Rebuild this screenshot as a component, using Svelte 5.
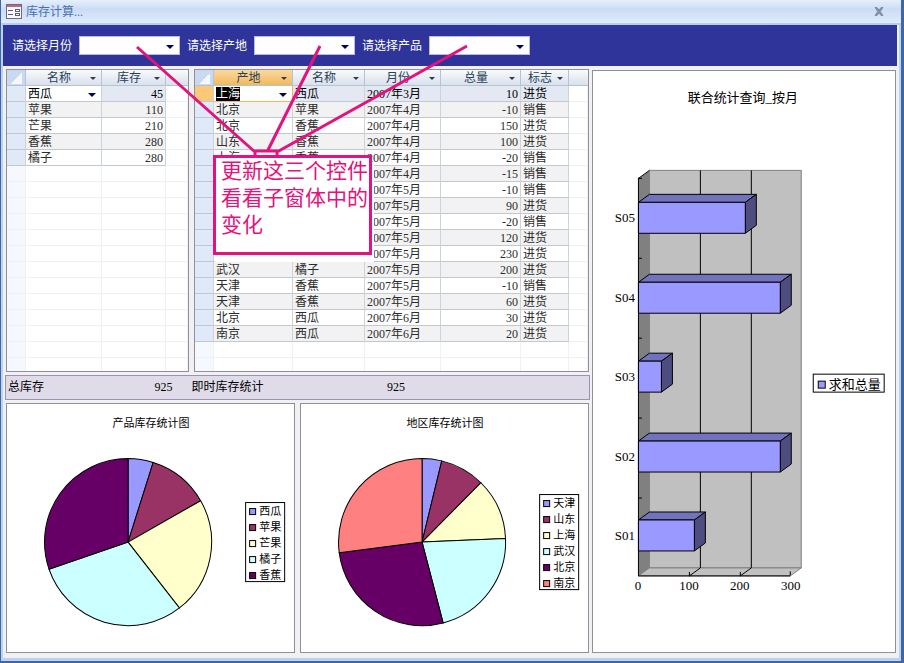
<script>
    // filters

    const filters = [
        { id: "month", label: "请选择月份" },
        { id: "place", label: "请选择产地" },
        { id: "product", label: "请选择产品" },
    ];

    // tables

    const rowCount = 18;

    const stock = [
        ["西瓜", 45],
        ["苹果", 110],
        ["芒果", 210],
        ["香蕉", 280],
        ["橘子", 280],
    ];

    const records = [
        ["上海", "西瓜", "2007年3月", 10, "进货"],
        ["北京", "苹果", "2007年4月", -10, "销售"],
        ["北京", "香蕉", "2007年4月", 150, "进货"],
        ["山东", "香蕉", "2007年4月", 100, "进货"],
        ["上海", "香蕉", "2007年4月", -20, "销售"],
        ["", "", "2007年4月", -15, "销售"],
        ["", "", "2007年5月", -10, "销售"],
        ["", "", "2007年5月", 90, "进货"],
        ["", "", "2007年5月", -20, "销售"],
        ["", "", "2007年5月", 120, "进货"],
        ["", "", "2007年5月", 230, "进货"],
        ["武汉", "橘子", "2007年5月", 200, "进货"],
        ["天津", "香蕉", "2007年5月", -10, "销售"],
        ["天津", "香蕉", "2007年5月", 60, "进货"],
        ["北京", "西瓜", "2007年6月", 30, "进货"],
        ["南京", "西瓜", "2007年6月", 20, "进货"],
    ];

    const tables = [
        { id: "stock", heads: ["名称", "库存"], rows: stock, num: 1 },
        {
            id: "records",
            heads: ["产地", "名称", "月份", "总量", "标志"],
            rows: records,
            num: 3,
        },
    ];

    const blanks = (table) =>
        Array.from({ length: rowCount - table.rows.length });

    // pies

    const colors = [
        "#9999ff",
        "#993366",
        "#ffffcc",
        "#ccffff",
        "#660066",
        "#ff8080",
    ];

    const pies = [
        {
            title: "产品库存统计图",
            legendY: 98,
            data: [
                ["西瓜", 45],
                ["苹果", 110],
                ["芒果", 210],
                ["橘子", 280],
                ["香蕉", 280],
            ],
        },
        {
            title: "地区库存统计图",
            legendY: 90,
            data: [
                ["天津", 35],
                ["山东", 80],
                ["上海", 110],
                ["武汉", 200],
                ["北京", 250],
                ["南京", 250],
            ],
        },
    ];

    const slices = (data, cx, cy, r) => {
        const total = data.reduce((sum, d) => sum + d[1], 0);
        const point = (v) => {
            const a = (v / total) * Math.PI * 2;
            return `${cx + r * Math.sin(a)} ${cy - r * Math.cos(a)}`;
        };
        let from = 0;
        return data.map((d) => {
            const to = from + d[1];
            const path = `M${cx} ${cy}L${point(from)}A${r} ${r} 0 0 1 ${point(to)}Z`;
            from = to;
            return path;
        });
    };

    // bars, top to bottom

    const bars = [
        ["S05", 210],
        ["S04", 280],
        ["S03", 45],
        ["S02", 280],
        ["S01", 110],
    ].map(([name, value], i) => ({
        name,
        x: 45.5 + Math.round(value * 0.508),
        y: 131.5 + Math.round(i * 79.6),
    }));
</script>

<div class="window">
    <header class="title">
        <svg width="16" height="15" viewBox="0 0 16 15" aria-hidden="true">
            <rect x="0.5" y="0.5" width="15" height="14" fill="#fbfafc" stroke="#6b6a86" />
            <rect x="1" y="1" width="14" height="2" fill="#c2657e" />
            <path d="M2 6.5h5M2 10.5h5" stroke="#5d5b78" />
            <rect x="9.5" y="5.5" width="4" height="2" fill="#fff" stroke="#5d5b78" />
            <rect x="9.5" y="9.5" width="4" height="2" fill="#fff" stroke="#5d5b78" />
        </svg>
        <h1>库存计算...</h1>
        <button class="close" aria-label="关闭">
            <svg width="10" height="9" viewBox="0 0 10 9">
                <path d="M1 0.5h2l2 2.5 2-2.5h2L6.3 4.5l2.7 4H7L5 6 3 8.5H1l2.7-4z" fill="#8593a8" stroke="#66758d" stroke-width="0.6" />
            </svg>
        </button>
    </header>

    <form class="filters">
        {#each filters as f}
            <label for={f.id}>{f.label}</label>
            <span class="drop">
                <select id={f.id}><option></option></select>
            </span>
        {/each}
    </form>

    <main>
        <div class="left">
            <div class="tables">
                {#each tables as t}
                    <div class="sheet {t.id}">
                        <table>
                            <colgroup>
                                <col class="sel" />
                                {#each t.heads as _, i}
                                    <col class="c{i}" />
                                {/each}
                                <col />
                            </colgroup>
                            <thead>
                                <tr>
                                    <th class="corner"><i></i></th>
                                    {#each t.heads as h}
                                        <th>
                                            <div class="head">
                                                <span>{h}</span>
                                                <button aria-label={h}></button>
                                            </div>
                                        </th>
                                    {/each}
                                    <th></th>
                                </tr>
                            </thead>
                            <tbody>
                                {#each t.rows as row, r}
                                    <tr class:current={r === 0}>
                                        <td class="sel"></td>
                                        {#each row as cell, c}
                                            {#if r === 0 && c === 0}
                                                <td class="edit">
                                                    <span class="drop">
                                                        <select aria-label={t.heads[0]}>
                                                            <option>{cell}</option>
                                                        </select>
                                                        <span class="value">{cell}</span>
                                                    </span>
                                                </td>
                                            {:else}
                                                <td class:num={c === t.num}>{cell}</td>
                                            {/if}
                                        {/each}
                                        <td class="rest"></td>
                                    </tr>
                                {/each}
                                {#each blanks(t) as _}
                                    <tr class="blank">
                                        <td class="sel"></td>
                                        {#each t.heads as _h}
                                            <td></td>
                                        {/each}
                                        <td></td>
                                    </tr>
                                {/each}
                            </tbody>
                        </table>
                    </div>
                {/each}
            </div>

            <div class="totals">
                <span>总库存</span>
                <span>925</span>
                <span>即时库存统计</span>
                <span>925</span>
            </div>

            <div class="pies">
                {#each pies as p}
                    <section class="panel">
                        <svg viewBox="0 0 287 248" role="img" aria-label={p.title}>
                            <text class="small" x="144" y="23" text-anchor="middle">{p.title}</text>
                            {#each slices(p.data, 121, 138, 83.5) as d, i}
                                <path {d} fill={colors[i]} stroke="#000" />
                            {/each}
                            <rect
                                x="238.5"
                                y={p.legendY + 0.5}
                                width="39"
                                height={p.data.length * 16 - 1}
                                fill="#fff"
                                stroke="#000"
                            />
                            {#each p.data as d, i}
                                <rect
                                    x="242.5"
                                    y={p.legendY + 6.5 + i * 16}
                                    width="6"
                                    height="6"
                                    fill={colors[i]}
                                    stroke="#000"
                                />
                                <text class="small" x="252" y={p.legendY + 13 + i * 16}>{d[0]}</text>
                            {/each}
                        </svg>
                    </section>
                {/each}
            </div>
        </div>

        <section class="panel">
            <svg viewBox="0 0 302 581" role="img" aria-label="联合统计查询_按月">
                <text x="150" y="31" text-anchor="middle">联合统计查询_按月</text>
                <path d="M56.5 99.5h152v398h-152z" fill="#c0c0c0" stroke="#808080" />
                <path d="M45.5 107.5l11-8v398l-11 8z" fill="#808080" />
                <path d="M45.5 505.5l11-8h152l-11 8z" fill="#c0c0c0" stroke="#808080" />
                <path d="M45.5 107.5l11-8M107.5 99.5v398l-11 8v-4M158.5 99.5v398l-11 8v-4M197.5 505v-4" fill="none" stroke="#000" />
                <path d="M45.5 107v398.5h152" fill="none" stroke="#000" />
                {#each bars as b, i}
                    <path d="M45 {107.5 + i * 80}h4" stroke="#000" />
                    <path d="M45.5 {b.y}l11-8H{b.x + 11}l-11 8z" fill="#7272bf" stroke="#000" />
                    <path d="M{b.x} {b.y}l11-8v31l-11 8z" fill="#4d4d80" stroke="#000" />
                    <path d="M45.5 {b.y}H{b.x}v31H45.5z" fill="#9999ff" stroke="#000" />
                    <text x="42" y={b.y + 20} text-anchor="end">{b.name}</text>
                {/each}
                {#each [0, 100, 200, 300] as n}
                    <text x={45 + n * 0.51} y="520" text-anchor="middle">{n}</text>
                {/each}
                <rect x="220.5" y="303.5" width="71" height="18" fill="#fff" stroke="#000" />
                <rect x="225.5" y="310.5" width="7" height="7" fill="#9999ff" stroke="#000" />
                <text x="236" y="318">求和总量</text>
            </svg>
        </section>
    </main>

    <svg class="lines" width="480" height="160" aria-hidden="true">
        <path d="M137 47L255 152M320 46L267 152M467 46L277 152M255 156v-5h22v5" />
    </svg>
    <aside class="note">更新这三个控件看看子窗体中的变化</aside>
</div>

<style>
    :global(body) {
        background: #f1f0f4;
    }

    .window {
        position: relative;
        display: flex;
        flex-direction: column;
        box-sizing: border-box;
        min-height: 100vh;
        padding: 0 3px 3px 0;
        border: 1px solid #3f66a8;
        border-width: 0 3px 2px 1px;
        box-shadow: inset 2px 0 #bcd2f2, inset -2px -3px #bcd2f2;
        font-family: "Liberation Serif", "Noto Sans CJK SC", sans-serif;
        font-size: 12px;
        line-height: 15px;
        color: #2c2c2c;
    }

    .title {
        display: flex;
        align-items: center;
        gap: 4px;
        height: 25px;
        margin-right: -3px;
        padding: 0 17px 0 5px;
        box-sizing: border-box;
        border-bottom: 2px solid #b5cdf0;
        background: linear-gradient(#e6effb, #d2e1f6 30%, #cadcf5 40%, #e0ebfb);
    }

    .title h1 {
        flex: 1;
        margin: 0;
        padding-top: 2px;
        font-size: 12px;
        font-weight: normal;
        color: #4a70ac;
    }

    .close {
        display: flex;
        padding: 0;
        border: 0;
        background: none;
    }

    .filters {
        display: flex;
        align-items: center;
        gap: 7px;
        height: 41px;
        margin: 0 1px 0 2px;
        padding-left: 9px;
        background: #2e3499;
        color: #fff;
    }

    .filters label {
        padding-top: 2px;
    }

    .drop {
        position: relative;
        display: block;
    }

    .drop::after {
        content: "";
        position: absolute;
        right: 6px;
        top: 50%;
        margin-top: -1px;
        border: 4px solid transparent;
        border-top-color: #000060;
        border-bottom: 0;
        pointer-events: none;
    }

    select {
        display: block;
        appearance: none;
        width: 100%;
        margin: 0;
        padding: 0 16px 0 2px;
        border: 0;
        border-radius: 0;
        background: #fff;
        font: inherit;
        color: inherit;
    }

    .filters select {
        width: 101px;
        height: 19px;
        border: 1px solid #b9bbd8;
    }

    main {
        flex: 1;
        display: grid;
        grid-template-columns: 586fr 304fr;
        gap: 2px;
        padding: 3px 2px 5px 4px;
    }

    .left {
        display: flex;
        flex-direction: column;
        min-width: 0;
    }

    .tables {
        display: grid;
        grid-template-columns: 183fr 395fr;
        gap: 5px;
        padding: 0 1px;
    }

    .sheet {
        height: 301px;
        overflow: hidden;
        border: 1px solid #919191;
        background: #fff;
    }

    table {
        width: 100%;
        table-layout: fixed;
        border-collapse: separate;
        border-spacing: 0;
    }

    col.sel {
        width: 19px;
    }

    .stock .c0 {
        width: 76px;
    }

    .stock .c1 {
        width: 64px;
    }

    .records .c0 {
        width: 79px;
    }

    .records .c1 {
        width: 72px;
    }

    .records .c2 {
        width: 76px;
    }

    .records .c3 {
        width: 80px;
    }

    .records .c4 {
        width: 48px;
    }

    th,
    td {
        box-sizing: border-box;
        height: 16px;
        padding: 2px 2px 0;
        border-right: 1px solid #cdd3dc;
        border-bottom: 1px solid #bfc8d3;
        overflow: hidden;
        line-height: 13px;
        white-space: nowrap;
    }

    th {
        border-color: #b5c3d6;
        background: linear-gradient(#f8fafd, #d9e1ec);
        font-weight: normal;
        color: #27405c;
    }

    th:last-child {
        border-right: 0;
    }

    .head {
        display: flex;
        align-items: center;
    }

    .head span {
        flex: 1;
        text-align: center;
    }

    .head button {
        width: 0;
        height: 0;
        margin-right: 3px;
        padding: 0;
        border: 3px solid transparent;
        border-top-color: #333a48;
        border-bottom: 0;
        background: none;
    }

    .corner {
        background: #c9daf0;
    }

    .corner i {
        display: block;
        width: 11px;
        height: 11px;
        margin-left: 2px;
        background: linear-gradient(135deg, transparent 50%, #f4f8fd 50%);
    }

    .records th:nth-child(2) {
        background: linear-gradient(#f9d99f, #f2b95c);
    }

    tr:nth-child(even) td {
        background: #f2f2f2;
    }

    tbody td.sel,
    tr:nth-child(even) td.sel {
        background: #dfe9f8;
    }

    .current td {
        background: #e4e8f3;
        color: #000;
    }

    .current td.edit {
        padding: 0;
        background: #fff;
    }

    .edit select {
        height: 15px;
        color: transparent;
    }

    .value {
        position: absolute;
        left: 2px;
        top: 1px;
        line-height: 14px;
        pointer-events: none;
    }

    .edit .drop::after {
        right: 5px;
    }

    .records .current .sel {
        background: #fbc878;
    }

    .records .edit {
        border-color: #f3b65d;
    }

    .records .value {
        background: #000;
        color: #fff;
    }

    .num {
        text-align: right;
    }

    tr td.rest,
    tr.blank td {
        border-color: #eef1f6;
        background: #fff;
    }

    tr.blank td.sel {
        background: #f5f8fe;
    }

    .totals {
        display: grid;
        grid-template-columns: 147fr 37fr 196fr 203fr;
        align-items: center;
        height: 23px;
        margin: 3px 0;
        padding-left: 2px;
        border: 1px solid #9a94ae;
        background: #dfdbe8;
        color: #000;
    }

    .pies {
        flex: 1;
        display: grid;
        grid-template-columns: 1fr 1fr;
        gap: 5px;
        padding: 0 1px;
    }

    .panel {
        border: 1px solid #919191;
        background: #fff;
    }

    .left + .panel {
        margin-top: 1px;
    }

    .panel svg {
        display: block;
        width: 100%;
    }

    .panel text {
        font-size: 13px;
        fill: #000;
    }

    .panel .small {
        font-size: 11px;
    }

    .lines {
        position: absolute;
        left: -1px;
        top: 0;
        pointer-events: none;
    }

    .lines path {
        fill: none;
        stroke: #e5127d;
        stroke-width: 3;
    }

    .note {
        position: absolute;
        left: 212px;
        top: 155px;
        width: 148px;
        height: 94px;
        padding: 0 0 0 5px;
        border: 3px solid #e5127d;
        background: #fff;
        box-shadow: 2px 7px #fff;
        font-size: 21px;
        line-height: 27px;
        color: #e5127d;
    }
</style>
